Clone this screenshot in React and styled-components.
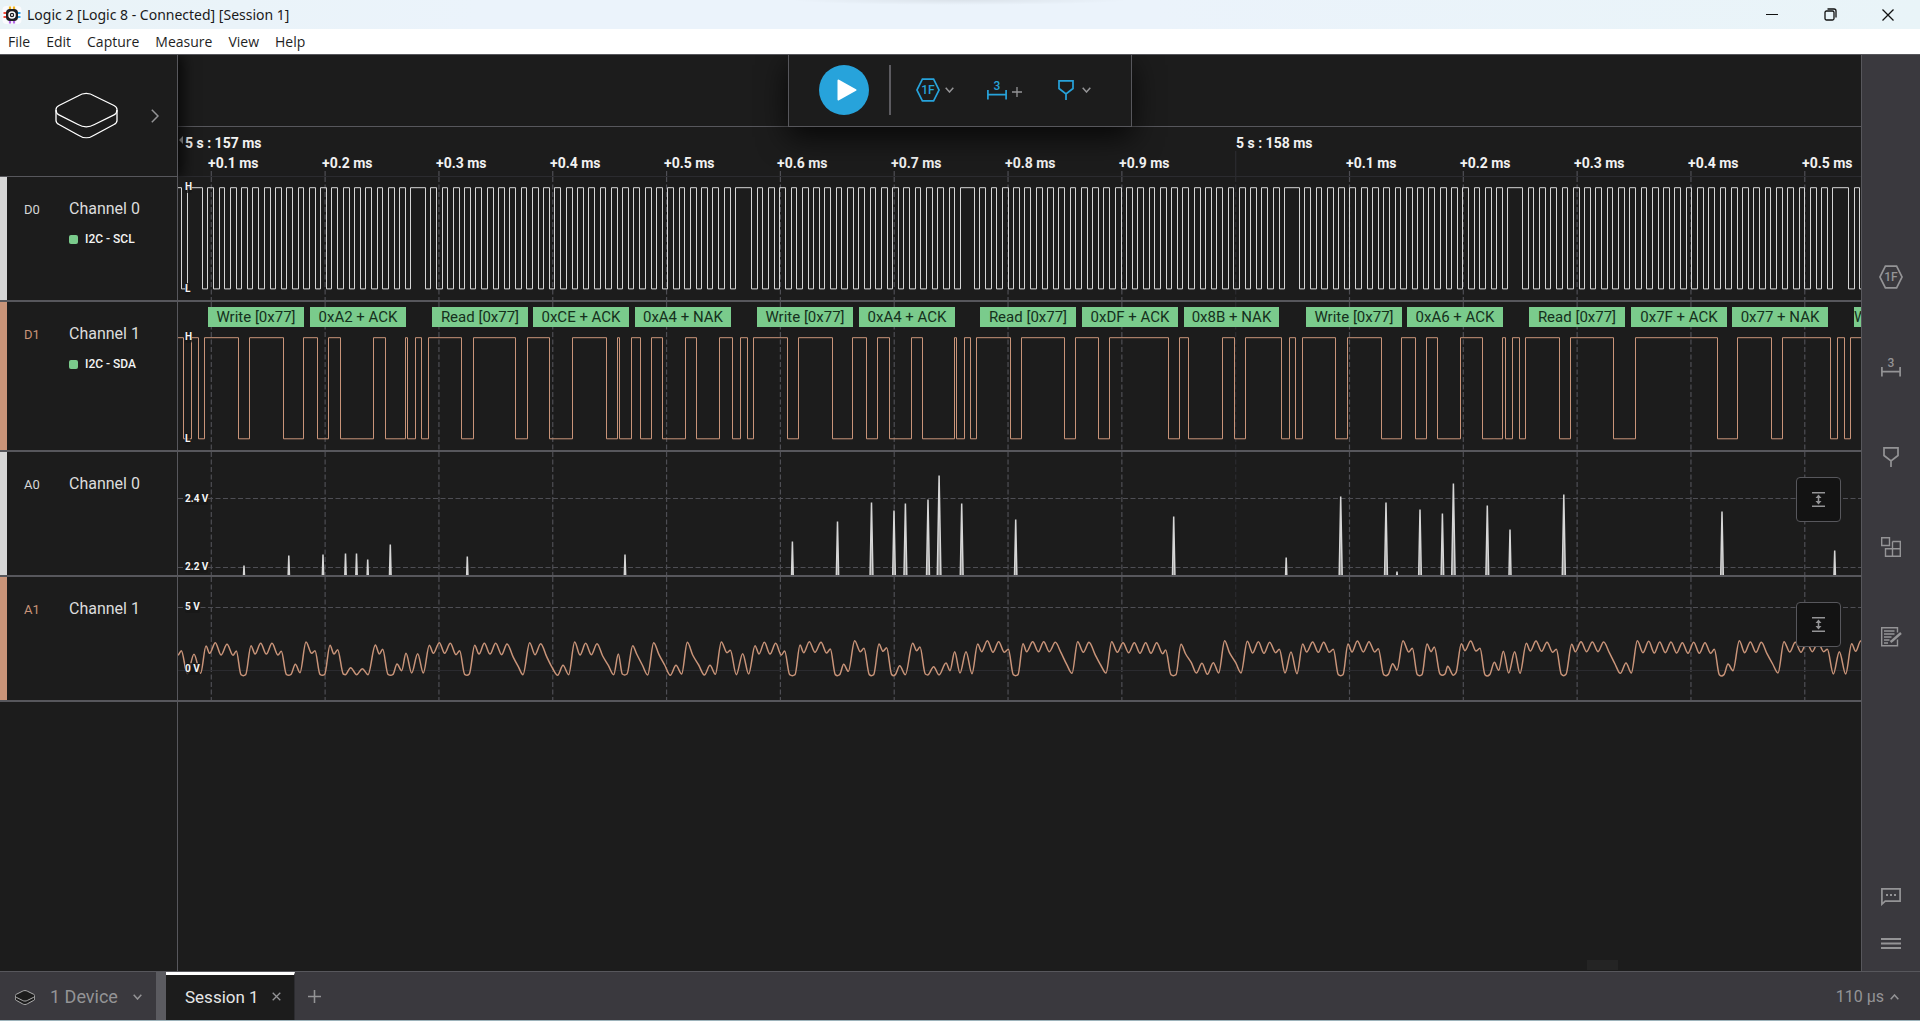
import React from "react";
import styled, { createGlobalStyle, css } from "styled-components";

const color = {
  bg: "#1c1c1c",
  panel: "#3a393e",
  line: "#57575c",
  faint: "#2b2b2f",
  grid: "#4e4e54",
  text: "#dcdcdc",
  muted: "#949496",
  blue: "#27a3db",
  green: "#7acb8c",
  white: "#d6d6d6",
  copper: "#c99479",
};

const GlobalStyle = createGlobalStyle`
  *, *::before, *::after { box-sizing: border-box; }
  html, body { margin: 0; background: ${color.bg}; }
  body { font-family: Roboto, "Open Sans", sans-serif; color: ${color.text}; overflow: hidden; }
  button { font: inherit; color: inherit; background: none; border: 0; padding: 0; margin: 0; cursor: pointer; }
  svg { display: block; }
`;

/* ---------- trace data ---------- */

// The plot area starts this far into the window; trace positions below are window x.
const PLOT_LEFT = 178;
const PLOT_END = 2600;

const TICK_START = 211.3;
const TICK_STEP = 113.82;
const TICKS = Array.from({ length: 15 }, (_, i) => {
  const tenth = (i + 1) % 10;
  return { x: TICK_START + TICK_STEP * i - PLOT_LEFT, tenth, major: tenth === 0 };
});

// Each burst: falling edge that opens it, number of clocks in it.
const CLOCK_PERIOD = 11.286;
const BURSTS = [
  [202.3, 18],
  [425.3, 27],
  [751.7, 18],
  [974.3, 27],
  [1299.3, 18],
  [1522.7, 27],
  [1848.7, 1],
];

const SCL_EDGES = (() => {
  const edges = [181, 187];
  BURSTS.forEach(([start, count]) => {
    for (let k = 0; k <= count; k += 1) {
      const fall = start + k * CLOCK_PERIOD;
      edges.push(Math.floor(fall), Math.floor(fall + 5.5));
    }
  });
  edges.pop();
  return edges;
})();

const SDA_EDGES = [
  183, 191, 198, 204, 238, 249, 283, 303, 317, 328, 340, 373, 385, 405, 407, 415, 421, 428, 461, 473,
  515, 527, 549, 572, 606, 617, 619, 631, 640, 651, 662, 685, 696, 719, 732, 740, 747, 753, 787, 798,
  832, 852, 866, 877, 889, 911, 922, 954, 956, 964, 970, 976, 1010, 1021, 1064, 1075, 1098, 1109,
  1168, 1179, 1188, 1222, 1234, 1245, 1281, 1289, 1295, 1302, 1335, 1347, 1381, 1401, 1415, 1426,
  1437, 1460, 1482, 1502, 1505, 1512, 1519, 1525, 1559, 1570, 1613, 1635, 1717, 1737, 1771, 1782,
  1830, 1837, 1844, 1850,
];

function squareWave(edges, high, low) {
  let level = high;
  let d = `M-2 ${high}`;
  edges.forEach((edge) => {
    const x = edge - PLOT_LEFT + 0.5;
    level = level === high ? low : high;
    d += `H${x}V${level}`;
  });
  return `${d}H${PLOT_END}`;
}

const SPIKES = [
  [244, 9], [288.8, 19], [323, 20], [345.5, 21], [356.5, 21], [367.7, 15], [390.3, 30], [467.3, 18],
  [625, 20], [792.4, 33], [837.5, 53], [871.5, 72], [894, 64], [905.4, 71], [928, 75], [939.1, 99],
  [961.7, 71], [1015.7, 55], [1173.7, 58], [1286.2, 17], [1340.7, 78], [1386, 72], [1397, 3],
  [1420, 65], [1442.4, 61], [1453.4, 91], [1487.3, 69], [1510, 45], [1563.8, 80], [1722, 63], [1834.7, 24],
];

// Turning points of the analog trace, in thirds of a pixel from each chunk's origin.
const ANALOG = [
  {
    x: 0,
    y: 300,
    points:
      "534,1065 544,1052 562,1122 582,1063 602,1120 618,1038 629,1060 646,1028 663,1065 681,1033 699,1066 709,1053 723,1124 730,1127 737,1124 753,1037 765,1062 782,1030 799,1062 816,1030 834,1065 844,1054 859,1123 866,1126 873,1123 886,1093 900,1118 918,1026 935,1060 945,1052 960,1123 967,1126 974,1123 990,1036 1002,1062 1013,1049 1030,1122 1036,1124 1052,1103 1070,1124 1087,1106 1104,1124 1126,1035 1138,1062 1148,1048 1164,1123 1172,1126 1179,1123 1191,1092 1205,1112 1218,1060 1235,1119 1253,1061 1270,1119 1288,1036 1300,1060 1318,1028 1334,1060 1351,1030 1368,1064 1379,1052 1394,1123 1401,1126 1408,1122",
  },
  {
    x: 470,
    y: 450,
    points:
      "14,586 27,612 43,580 60,612 77,580 95,614 111,582 130,622 145,650 159,674 179,578 195,614 212,581 230,620 245,650 263,676 279,646 296,674 314,576 330,615 347,580 364,614 381,581 398,618 415,646 431,674 445,612 457,672 464,675 471,672 488,587 500,612 517,645 533,675 551,578 567,614 584,645 601,676 618,646 635,672 652,577 668,615 686,645 703,675 720,646 736,673 754,576 771,608 781,601 799,674 818,611 836,672 855,587 867,612 883,577 900,612 917,580 934,615 944,603 959,674 967,677 975,674 990,585 1001,608 1018,575 1035,607 1053,577 1070,609 1081,597 1096,674 1102,677 1109,674 1121,643 1135,664 1154,572 1171,605 1182,595 1198,674 1204,677 1211,674 1227,582 1239,604 1250,593 1265,674 1271,677 1276,674 1289,647 1306,674 1328,580 1340,602 1350,591 1366,672 1373,675 1391,650 1407,675 1428,639 1440,662",
  },
  {
    x: 950,
    y: 450,
    points:
      "14,605 30,669 48,605 66,671 83,582 95,605 112,572 129,607 146,575 163,607 175,598 190,674 197,677 204,674 219,581 230,605 248,575 265,605 281,575 298,605 316,577 333,608 350,643 366,670 383,575 400,607 417,577 435,613 452,645 468,669 485,575 502,607 519,578 536,608 553,578 570,610 587,578 603,610 620,578 638,611 647,600 663,674 670,677 678,674 693,583 707,612 724,638 739,669 756,640 772,673 790,638 806,669 824,572 838,607 857,638 873,669 892,574 908,609 925,575 942,610 959,577 977,608 988,598 1005,669 1023,606 1041,671 1058,582 1070,606 1088,576 1105,607 1121,577 1138,607 1150,598 1165,674 1172,677 1179,674 1194,582 1206,606 1222,573 1240,606 1257,575 1274,606 1285,596 1301,674 1308,677 1315,673 1328,641 1341,660 1359,572 1376,606 1387,595 1402,674 1409,677 1416,674 1431,582",
  },
  {
    x: 1430,
    y: 450,
    points:
      "3,605 13,591 30,672 37,676 45,672 53,649 70,676 78,668 94,581 105,602 122,573 138,603 150,595 165,674 172,678 179,674 193,637 206,661 220,604 236,669 254,605 270,670 289,580 301,603 318,573 335,604 351,577 368,607 379,598 394,673 401,677 408,673 425,583 436,605 453,575 470,605 487,576 504,605 521,576 538,608 555,642 571,670 588,639 604,669 622,572 639,608 656,574 673,609 689,576 706,608 723,576 740,609 757,578 774,610 791,577 808,610 825,578 842,610 853,598 868,674 875,678 882,674 894,642 909,662 928,572 944,608 961,576 978,607 994,577 1011,611 1028,642 1044,669 1062,575 1079,606 1096,577 1113,607 1130,577 1147,605 1164,577 1181,605 1192,598 1210,672 1228,605 1247,672 1265,581 1277,604 1292,573 1300,580",
  },
];

const ANALOG_ROW_TOP = 577;

// Cubic path through the turning points, flat at every local peak and trough.
function analogPath() {
  const pts = ANALOG.flatMap(({ x, y, points }) =>
    points.split(" ").map((pair) => {
      const [px, py] = pair.split(",").map(Number);
      return [x + px / 3 - PLOT_LEFT, y + py / 3 - ANALOG_ROW_TOP];
    })
  );
  const slope = pts.map((p, i) => {
    if (i === 0 || i === pts.length - 1) return 0;
    const a = (p[1] - pts[i - 1][1]) / (p[0] - pts[i - 1][0]);
    const b = (pts[i + 1][1] - p[1]) / (pts[i + 1][0] - p[0]);
    return a * b <= 0 ? 0 : (2 * a * b) / (a + b);
  });
  let d = `M${pts[0][0].toFixed(2)} ${pts[0][1].toFixed(2)}`;
  for (let i = 1; i < pts.length; i += 1) {
    const [x0, y0] = pts[i - 1];
    const [x1, y1] = pts[i];
    const h = (x1 - x0) / 3;
    d += `C${(x0 + h).toFixed(2)} ${(y0 + slope[i - 1] * h).toFixed(2)} ${(x1 - h).toFixed(2)} ${(y1 - slope[i] * h).toFixed(2)} ${x1.toFixed(2)} ${y1.toFixed(2)}`;
  }
  return d;
}

const SCL_PATH = squareWave(SCL_EDGES, 10.7, 111.9);
const SDA_PATH = squareWave(SDA_EDGES, 35.7, 136.8);
const A1_PATH = analogPath();

const FRAMES = [
  [208, 96, "Write [0x77]"],
  [310, 96, "0xA2 + ACK"],
  [432, 96, "Read [0x77]"],
  [533, 96, "0xCE + ACK"],
  [635, 96, "0xA4 + NAK"],
  [757, 96, "Write [0x77]"],
  [859, 96, "0xA4 + ACK"],
  [980, 96, "Read [0x77]"],
  [1082, 96, "0xDF + ACK"],
  [1184, 95, "0x8B + NAK"],
  [1306, 96, "Write [0x77]"],
  [1407, 96, "0xA6 + ACK"],
  [1529, 96, "Read [0x77]"],
  [1631, 96, "0x7F + ACK"],
  [1732, 96, "0x77 + NAK"],
  [1854, 7, "W"],
];

/* ---------- window chrome ---------- */

const Window = styled.div`
  display: flex;
  flex-direction: column;
  height: 100vh;
  background: ${color.bg};
  border-bottom: 1px solid #9db3bb;
`;

const TitleBar = styled.header`
  display: flex;
  align-items: center;
  flex: none;
  height: 29px;
  padding: 0 3px 0 2px;
  background: radial-gradient(ellipse 170px 5px at 50% 0, rgba(0, 0, 0, 0.07), transparent),
    linear-gradient(90deg, #e9f3f7, #ebf3fb 25%, #ebf3fb 60%, #e9f4f8);
  color: #1a1a1a;
  font-family: "Noto Sans", "Open Sans", sans-serif;
`;

const Title = styled.h1`
  flex: 1;
  margin: 0 0 0 5px;
  font-size: 14px;
  font-weight: 400;
  line-height: 20px;
`;

const WindowButton = styled.button`
  display: grid;
  place-items: center;
  width: 58px;
  height: 28px;
`;

const MenuBar = styled.nav`
  position: relative;
  z-index: 3;
  display: flex;
  align-items: center;
  flex: none;
  gap: 16px;
  height: 25px;
  padding-left: 8px;
  background: #fff;
  color: #1f1f1f;
  font-family: "Open Sans", "Noto Sans", sans-serif;
  font-size: 14px;
  line-height: 20px;
`;

const Workspace = styled.div`
  position: relative;
  display: flex;
  flex: 1;
  min-height: 0;
  border-top: 1px solid ${color.line};
`;

/* ---------- floating capture toolbar ---------- */

const CaptureBar = styled.div`
  position: absolute;
  top: 0;
  left: 50%;
  z-index: 2;
  display: flex;
  align-items: center;
  width: 344px;
  height: 72px;
  margin-left: -172px;
  padding: 0 30px 1px;
  background: ${color.bg};
  border: 1px solid ${color.line};
  border-top: 0;
  box-shadow: 0 10px 30px rgba(0, 0, 0, 0.75);
  clip-path: inset(0 -50px -50px);
`;

const PlayButton = styled.button`
  display: grid;
  place-items: center;
  width: 50px;
  height: 50px;
  padding-left: 5px;
  border-radius: 50%;
  background: ${color.blue};
`;

const Divider = styled.span`
  width: 2px;
  height: 50px;
  margin: 0 25px 0 20px;
  background: #5c5b60;
`;

const Tools = styled.div`
  display: grid;
  grid-template-columns: repeat(3, 71px);
  width: 180px;
`;

const ToolButton = styled.button`
  display: flex;
  align-items: center;
  gap: ${(p) => p.$gap || 5}px;
  color: ${color.blue};

  & > svg:last-child {
    margin-top: ${(p) => p.$drop || 0}px;
  }
`;

/* ---------- channels ---------- */

const Main = styled.main`
  display: flex;
  flex-direction: column;
  flex: 1;
  min-width: 0;
`;

const cell = css`
  flex: none;
  width: 178px;
  border-right: 1px solid ${color.line};
`;

const TopRow = styled.div`
  display: flex;
  height: 122px;
`;

const DevicePanel = styled.div`
  ${cell}
  z-index: 1;
  display: flex;
  align-items: center;
  gap: 33px;
  padding-left: 55px;
  border-bottom: 1px solid ${color.line};
  box-shadow: 4px 0 14px rgba(0, 0, 0, 0.8);
  clip-path: inset(0 -30px 0 0);
`;

const TimeHeader = styled.div`
  display: flex;
  flex-direction: column;
  flex: 1;
  min-width: 0;
`;

const HeaderSpace = styled.div`
  height: 72px;
  border-bottom: 1px solid ${color.line};
`;

const Ruler = styled.div`
  position: relative;
  flex: 1;
  overflow: hidden;
  border-bottom: 1px solid ${color.faint};
  color: #f2f2f2;
  font-size: 14px;
  font-weight: 700;
  line-height: 16px;
`;

const RulerLabel = styled.span`
  position: absolute;
  top: ${(p) => (p.$major ? 8 : 28)}px;
  white-space: nowrap;
`;

const RulerArrow = styled.span`
  position: absolute;
  top: 9px;
  left: 1px;
  width: 4px;
  height: 8px;
  background: #aaa;
  clip-path: polygon(100% 0, 100% 100%, 0 50%);
`;

const Row = styled.section`
  display: flex;
  flex: none;
  height: ${(p) => (p.$tall ? 150 : 125)}px;
  border-bottom: 2px solid ${color.line};
`;

const ChannelCell = styled.div`
  ${cell}
  display: flex;
  align-items: flex-start;
  padding: 22px 0 0 17px;
  border-left: 7px solid ${(p) => p.$tint};
`;

const ChannelId = styled.span`
  width: 45px;
  color: ${(p) => p.$tint};
  font-size: 13px;
  line-height: 22px;
`;

const ChannelBody = styled.div`
  display: flex;
  flex-direction: column;
  gap: 11px;
`;

const ChannelName = styled.h2`
  margin: 0;
  font-size: 16px;
  font-weight: 400;
  line-height: 20px;
`;

const AnalyzerTag = styled.span`
  display: flex;
  align-items: center;
  gap: 7px;
  color: #f4f4f4;
  font-size: 12px;
  font-weight: 500;
  line-height: 18px;

  &::before {
    content: "";
    width: 9px;
    height: 9px;
    border-radius: 2px;
    background: ${color.green};
  }
`;

const Plot = styled.div`
  position: relative;
  flex: 1;
  min-width: 0;
  overflow: hidden;
`;

const Canvas = styled.svg`
  width: 100%;
  height: 100%;
`;

const AxisLabel = styled.span`
  position: absolute;
  left: 7px;
  color: #f4f4f4;
  background: rgba(23, 23, 23, 0.75);
  border-radius: 2px;
  font-size: 10px;
  font-weight: 700;
  line-height: 12px;
`;

const Frame = styled.span`
  position: absolute;
  top: 5px;
  height: 20px;
  overflow: hidden;
  background: ${color.green};
  color: #15301c;
  font-size: 15px;
  line-height: 20px;
  text-align: center;
  white-space: nowrap;
`;

const FitButton = styled.button`
  position: absolute;
  top: 25px;
  right: 20px;
  display: grid;
  place-items: center;
  width: 45px;
  height: 45px;
  border: 1px solid ${color.line};
  border-radius: 4px;
  background: #131313;
  color: ${color.muted};
`;

const Empty = styled.div`
  display: flex;
  flex: 1;
`;

const EmptyCell = styled.div`
  ${cell}
`;

const EmptyPlot = styled.div`
  display: flex;
  flex: 1;
  align-items: flex-end;
  justify-content: flex-end;
  padding: 0 243px 1px 0;
`;

const ScrollThumb = styled.span`
  width: 31px;
  height: 10px;
  background: #242424;
`;

/* ---------- right rail and footer ---------- */

const Rail = styled.aside`
  display: flex;
  flex-direction: column;
  flex: none;
  width: 59px;
  padding: 177px 0 4px;
  background: ${color.panel};
  border-left: 1px solid ${color.line};
  color: ${color.muted};
`;

const RailButton = styled.button`
  display: grid;
  place-items: center;
  height: ${(p) => (p.$compact ? 47 : 90)}px;
`;

const RailSpacer = styled.div`
  flex: 1;
`;

const Footer = styled.footer`
  display: flex;
  flex: none;
  height: 49px;
  background: ${color.panel};
  border-top: 1px solid ${color.line};
  color: ${color.muted};
  font-size: 18px;
  line-height: 24px;
`;

const DeviceButton = styled.button`
  display: flex;
  align-items: center;
  gap: 15px;
  width: 166px;
  padding: 2px 0 0 15px;
  border-right: 10px solid #5b5b60;
`;

const Tab = styled.div`
  display: flex;
  align-items: center;
  gap: 13px;
  width: 129px;
  padding: 0 0 2px 19px;
  background: ${color.bg};
  border-top: 3px solid #fff;
  border-right: 1px solid #2c2c30;
  color: #e6e6e6;
  font-size: 17px;
`;

const TabClose = styled.button`
  color: ${color.muted};
`;

const AddTab = styled.button`
  display: grid;
  place-items: center;
  width: 39px;
`;

const Delta = styled.button`
  display: flex;
  align-items: center;
  gap: 6px;
  margin-left: auto;
  padding: 2px 21px 0 0;
  font-size: 16px;
`;

/* ---------- icons ---------- */

const stroke = { fill: "none", stroke: "currentColor" };

const Chevron = ({ dir = "down", w = 9, h = 6, grey }) => {
  const d = {
    down: `M.7 .7L${w / 2} ${h - 1}L${w - 0.7} .7`,
    up: `M.7 ${h - 0.7}L${w / 2} 1L${w - 0.7} ${h - 0.7}`,
    right: `M.8 .8L${w - 1} ${h / 2}L.8 ${h - 0.8}`,
  }[dir];
  return (
    <svg width={w} height={h} {...stroke} stroke={grey || "currentColor"} strokeWidth="1.5" aria-hidden="true">
      <path d={d} />
    </svg>
  );
};

const DeviceIcon = ({ width, height, sw = 1.3, fill = "none", tint = "#fff" }) => (
  <svg width={width} height={height} viewBox="0 0 63 47" fill={fill} stroke={tint} strokeWidth={sw} aria-hidden="true">
    <path d="M1 18V17.5C1 15.5 2 14.5 4 13.5L23 4C28 .9 34.5 .9 39.500 4L59 13.500C61 14.500 62 15.500 62 17.500V28.500C62 30.500 61 31.500 59 32.500L39.500 43C34.500 46.500 28 46.500 23 43L4 32.500C2 31.500 1 30.500 1 28.500Z" />
    <path d="M1 18C1 20.500 2 21.800 4 22.800L23 32.500C28 35.400 34.500 35.400 39.500 32.500L59 22.800C61 21.800 62 20.500 62 18" />
  </svg>
);

const AnalyzerIcon = () => (
  <svg width="24" height="24" {...stroke} strokeWidth="1.7" aria-hidden="true">
    <path d="M6.400 1.200H17.600L23.100 12L17.600 22.800H6.400L.9 12Z" />
    <text x="12" y="16.200" textAnchor="middle" fontSize="12" fontWeight="500" fill="currentColor" stroke="none">
      1F
    </text>
  </svg>
);

const MeasureIcon = () => (
  <svg width="20" height="20" {...stroke} strokeWidth="1.700" aria-hidden="true">
    <path d="M.9 10V19.500M19.100 10V19.500M.9 14.700H19.100" />
    <text x="10" y="10" textAnchor="middle" fontSize="12" fontWeight="500" fill="currentColor" stroke="none">
      3
    </text>
  </svg>
);

const MarkerIcon = () => (
  <svg width="16" height="20" {...stroke} strokeWidth="1.700" aria-hidden="true">
    <path d="M1 .9H15V8.500L8 14L1 8.500ZM8 14V20" />
  </svg>
);

const BlocksIcon = () => (
  <svg width="20" height="20" {...stroke} strokeWidth="1.400" aria-hidden="true">
    <path d="M.7 .7H8.500V8.500H.7ZM11.500 4.500H19.300V19.300H4.500V11.700H19.300M11.500 4.500V19.300" />
  </svg>
);

const NotesIcon = () => (
  <svg width="21" height="20" {...stroke} strokeWidth="1.400" aria-hidden="true">
    <path d="M16.500 5.500V.8H.7V18.800H16.500V12.500M3 4H13.500M3 7H13.500M3 10H10.500M3 13H8.500M3 16H7" />
    <path d="M20 6L11.500 13.500L9.500 15" strokeWidth="2.400" />
  </svg>
);

const ChatIcon = () => (
  <svg width="20" height="18" {...stroke} strokeWidth="1.700" aria-hidden="true">
    <path d="M.9 16.200V.9H19.100V13.200H4.200Z" />
    <path d="M5 7H7M9 7H11M13 7H15" strokeWidth="2" />
  </svg>
);

const MenuIcon = () => (
  <svg width="20" height="13" {...stroke} strokeWidth="2.200" aria-hidden="true">
    <path d="M0 2H20M0 6.500H20M0 11H20" />
  </svg>
);

const FitIcon = () => (
  <svg width="13" height="15" {...stroke} strokeWidth="1.500" aria-hidden="true">
    <path d="M0 .8H13M0 14.200H13M6.500 5V10" />
    <path d="M6.500 2.500L9.500 6H3.500ZM6.500 12.500L9.500 9H3.500Z" fill="currentColor" stroke="none" />
  </svg>
);

const PlusIcon = ({ size, tint, sw = 1.6 }) => (
  <svg width={size} height={size} viewBox="0 0 10 10" stroke={tint} strokeWidth={sw} aria-hidden="true">
    <path d="M0 5H10M5 0V10" />
  </svg>
);

const AppIcon = () => (
  <svg width="20" height="20" aria-hidden="true">
    <rect x=".5" y="1" width="19" height="18" rx="4" fill="#fafbfd" />
    <path d="M8 1.500V5M12 1.500V5" stroke="#f3b61f" strokeWidth="2.200" />
    <path d="M8 15V18.500M12 15V18.500" stroke="#b46be8" strokeWidth="2.200" />
    <path d="M1.500 8H5M1.500 12H5" stroke="#ee4b3b" strokeWidth="2.200" />
    <path d="M15 8H18.500M15 12H18.500" stroke="#34a8ea" strokeWidth="2.200" />
    <rect x="4" y="4" width="12" height="12" rx="4" fill="#1f1f22" />
    <circle cx="10" cy="10" r="3" fill="none" stroke="#fff" strokeWidth="1.500" />
    <circle cx="10" cy="10" r="1" fill="#fff" />
  </svg>
);

/* ---------- plots ---------- */

const Grid = ({ levels = [], zero }) => (
  <g stroke={color.grid} strokeWidth="1.200">
    {TICKS.map((t) => (
      <line
        key={t.x}
        x1={t.x}
        x2={t.x}
        y1="0"
        y2="100%"
        stroke={t.major ? color.faint : undefined}
        strokeDasharray="5 2.500"
      />
    ))}
    {levels.map((y) => (
      <line key={y} x1="0" x2="100%" y1={y} y2={y} strokeDasharray="5 2.500" />
    ))}
    {zero && <line x1="0" x2="100%" y1={zero} y2={zero} stroke={color.faint} strokeWidth="1" />}
  </g>
);

const Channel = ({ id, name, analyzer, tint, tall, labels, levels, zero, fit, children, overlay }) => (
  <Row $tall={tall} aria-label={`${id} ${name}`}>
    <ChannelCell $tint={tint}>
      <ChannelId $tint={tint}>{id}</ChannelId>
      <ChannelBody>
        <ChannelName>{name}</ChannelName>
        {analyzer && <AnalyzerTag>{analyzer}</AnalyzerTag>}
      </ChannelBody>
    </ChannelCell>
    <Plot>
      <Canvas aria-hidden="true">
        <Grid levels={levels} zero={zero} />
        <g fill="none" stroke={tint} strokeWidth="1">
          {children}
        </g>
      </Canvas>
      {overlay}
      {labels.map(([text, y]) => (
        <AxisLabel key={text} style={{ top: y }}>
          {text}
        </AxisLabel>
      ))}
      {fit && (
        <FitButton type="button" aria-label={`Fit ${name} vertically`}>
          <FitIcon />
        </FitButton>
      )}
    </Plot>
  </Row>
);

const TimeRuler = () => (
  <Ruler>
    <Canvas aria-hidden="true">
      {TICKS.map((t) => (
        <line
          key={t.x}
          x1={t.x}
          x2={t.x}
          y1={t.major ? 24 : 44}
          y2="50"
          stroke={t.major ? color.faint : color.grid}
          strokeWidth="1.200"
        />
      ))}
    </Canvas>
    <RulerArrow />
    <RulerLabel $major style={{ left: 7 }}>
      5 s : 157 ms
    </RulerLabel>
    {TICKS.map((t, i) => (
      <RulerLabel key={t.x} $major={t.major} style={{ left: Math.round(t.x) - (t.major ? 0 : 3) }}>
        {t.major ? `5 s : ${158 + Math.floor(i / 10)} ms` : `+0.${t.tenth} ms`}
      </RulerLabel>
    ))}
  </Ruler>
);

const MENUS = ["File", "Edit", "Capture", "Measure", "View", "Help"];

export default function App() {
  return (
    <>
      <GlobalStyle />
      <Window>
        <TitleBar>
          <AppIcon />
          <Title>Logic 2 [Logic 8 - Connected] [Session 1]</Title>
          <WindowButton type="button" aria-label="Minimize">
            <svg width="12" height="12" stroke="#111" aria-hidden="true">
              <path d="M0 5.500H12" />
            </svg>
          </WindowButton>
          <WindowButton type="button" aria-label="Restore">
            <svg width="13" height="13" fill="none" stroke="#111" strokeWidth="1.300" aria-hidden="true">
              <rect x="1" y="3" width="9" height="9" rx="1.500" />
              <path d="M3.500 1H10Q12 1 12 3V9.500" />
            </svg>
          </WindowButton>
          <WindowButton type="button" aria-label="Close">
            <svg width="12" height="12" stroke="#111" strokeWidth="1.300" aria-hidden="true">
              <path d="M.5 .5L11.500 11.500M11.500 .5L.5 11.500" />
            </svg>
          </WindowButton>
        </TitleBar>

        <MenuBar aria-label="Application menu">
          {MENUS.map((m) => (
            <button type="button" key={m}>
              {m}
            </button>
          ))}
        </MenuBar>

        <Workspace>
          <CaptureBar role="toolbar" aria-label="Capture">
            <PlayButton type="button" aria-label="Start capture">
              <svg width="20" height="22" fill="#fff" stroke="#fff" strokeWidth="2" strokeLinejoin="round" aria-hidden="true">
                <path d="M1.500 1.500L18.500 11L1.500 20.500Z" />
              </svg>
            </PlayButton>
            <Divider />
            <Tools>
              <ToolButton type="button" aria-label="Add analyzer">
                <AnalyzerIcon />
                <Chevron grey={color.muted} />
              </ToolButton>
              <ToolButton type="button" $drop={4} aria-label="Add measurement">
                <MeasureIcon />
                <PlusIcon size={10} tint={color.muted} sw={1.3} />
              </ToolButton>
              <ToolButton type="button" $gap={8} aria-label="Add timing marker">
                <MarkerIcon />
                <Chevron grey={color.muted} />
              </ToolButton>
            </Tools>
          </CaptureBar>

          <Main>
            <TopRow>
              <DevicePanel>
                <DeviceIcon width={63} height={47} />
                <button type="button" aria-label="Device settings">
                  <Chevron dir="right" w={8} h={14} grey={color.muted} />
                </button>
              </DevicePanel>
              <TimeHeader>
                <HeaderSpace />
                <TimeRuler />
              </TimeHeader>
            </TopRow>

            <Channel id="D0" name="Channel 0" analyzer="I2C - SCL" tint={color.white} labels={[["H", 4], ["L", 106]]}>
              <path d={SCL_PATH} />
            </Channel>

            <Channel
              id="D1"
              name="Channel 1"
              analyzer="I2C - SDA"
              tint={color.copper}
              tall
              labels={[["H", 29], ["L", 131]]}
              overlay={FRAMES.map(([x, width, text]) => (
                <Frame key={x} style={{ left: x - PLOT_LEFT, width }}>
                  {text}
                </Frame>
              ))}
            >
              <path d={SDA_PATH} />
            </Channel>

            <Channel
              id="A0"
              name="Channel 0"
              tint={color.white}
              levels={[46.5, 115.5]}
              labels={[["2.4 V", 41], ["2.2 V", 109]]}
              fit
            >
              {SPIKES.map(([x, h]) => {
                const c = x - PLOT_LEFT;
                const w = 0.4 + h / 70;
                return (
                  <path
                    key={x}
                    strokeWidth="1.500"
                    fill="#8e8e8e"
                    d={`M${c - w} 124L${c} ${122.5 - h}L${c + w} 124`}
                  />
                );
              })}
            </Channel>

            <Channel
              id="A1"
              name="Channel 1"
              tint={color.copper}
              levels={[30.5]}
              zero={93.5}
              labels={[["5 V", 24], ["0 V", 86]]}
              fit
            >
              <path d={A1_PATH} strokeWidth="1.500" />
            </Channel>

            <Empty>
              <EmptyCell />
              <EmptyPlot>
                <ScrollThumb />
              </EmptyPlot>
            </Empty>
          </Main>

          <Rail aria-label="Panels">
            <RailButton type="button" aria-label="Analyzers">
              <AnalyzerIcon />
            </RailButton>
            <RailButton type="button" aria-label="Measurements">
              <MeasureIcon />
            </RailButton>
            <RailButton type="button" aria-label="Timing markers">
              <MarkerIcon />
            </RailButton>
            <RailButton type="button" aria-label="Extensions">
              <BlocksIcon />
            </RailButton>
            <RailButton type="button" aria-label="Notes">
              <NotesIcon />
            </RailButton>
            <RailSpacer />
            <RailButton type="button" $compact aria-label="Feedback">
              <ChatIcon />
            </RailButton>
            <RailButton type="button" $compact aria-label="Main menu">
              <MenuIcon />
            </RailButton>
          </Rail>
        </Workspace>

        <Footer>
          <DeviceButton type="button">
            <DeviceIcon width={20} height={15} sw={3} fill="#1c1c1c" tint="#b4b4b4" />
            1 Device
            <Chevron />
          </DeviceButton>
          <Tab>
            Session 1
            <TabClose type="button" aria-label="Close Session 1">
              <svg width="9" height="9" stroke="currentColor" strokeWidth="1.300" aria-hidden="true">
                <path d="M.7 .7L8.300 8.300M8.300 .7L.7 8.300" />
              </svg>
            </TabClose>
          </Tab>
          <AddTab type="button" aria-label="New session">
            <PlusIcon size={13} tint={color.muted} sw={1.2} />
          </AddTab>
          <Delta type="button">
            110 µs
            <Chevron dir="up" />
          </Delta>
        </Footer>
      </Window>
    </>
  );
}
